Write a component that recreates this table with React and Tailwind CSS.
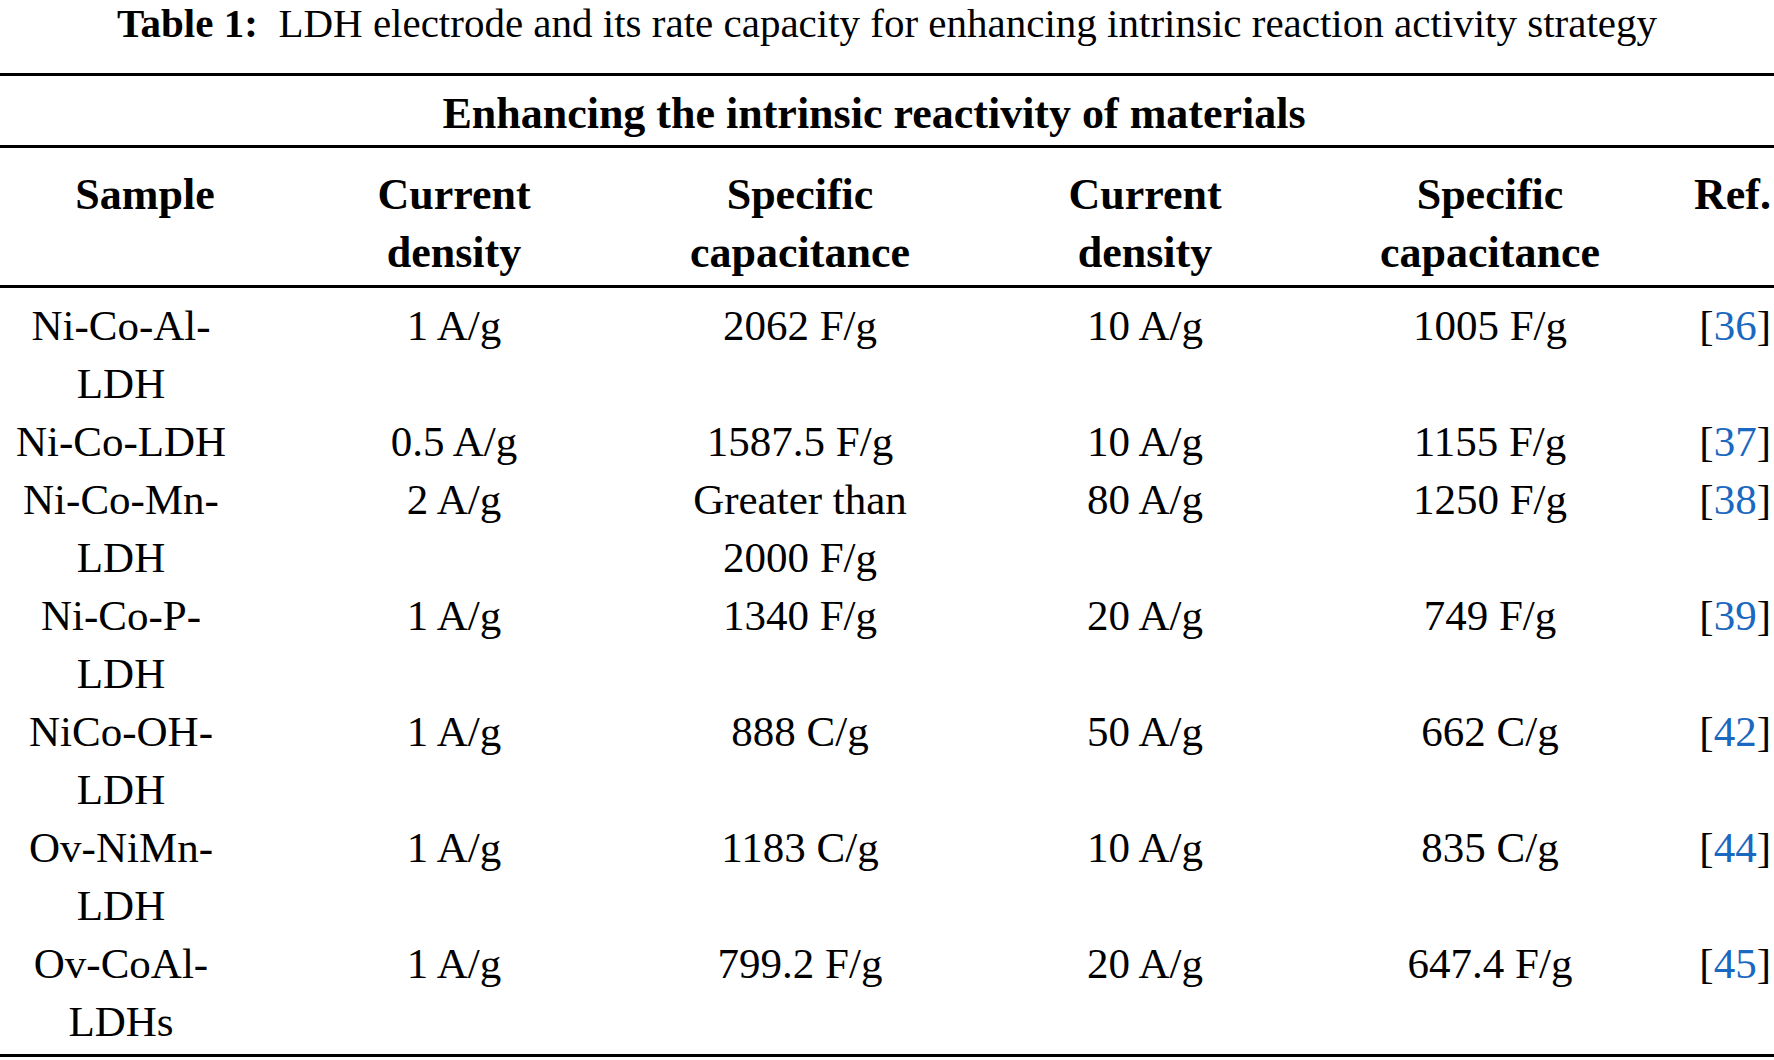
const rows = [
  { sample: ['Ni-Co-Al-', 'LDH'], cd1: '1 A/g', sc1: ['2062 F/g'], cd2: '10 A/g', sc2: '1005 F/g', ref: '36' },
  { sample: ['Ni-Co-LDH'], cd1: '0.5 A/g', sc1: ['1587.5 F/g'], cd2: '10 A/g', sc2: '1155 F/g', ref: '37' },
  { sample: ['Ni-Co-Mn-', 'LDH'], cd1: '2 A/g', sc1: ['Greater than', '2000 F/g'], cd2: '80 A/g', sc2: '1250 F/g', ref: '38' },
  { sample: ['Ni-Co-P-', 'LDH'], cd1: '1 A/g', sc1: ['1340 F/g'], cd2: '20 A/g', sc2: '749 F/g', ref: '39' },
  { sample: ['NiCo-OH-', 'LDH'], cd1: '1 A/g', sc1: ['888 C/g'], cd2: '50 A/g', sc2: '662 C/g', ref: '42' },
  { sample: ['Ov-NiMn-', 'LDH'], cd1: '1 A/g', sc1: ['1183 C/g'], cd2: '10 A/g', sc2: '835 C/g', ref: '44' },
  { sample: ['Ov-CoAl-', 'LDHs'], cd1: '1 A/g', sc1: ['799.2 F/g'], cd2: '20 A/g', sc2: '647.4 F/g', ref: '45' },
]

const cols = 'grid grid-cols-[242px_424px_268px_422px_268px_1fr]'

function Lines({ items }) {
  return items.map((t, i) => <div key={i}>{t}</div>)
}

function App() {
  return (
    <div className="w-[1774px] h-[1060px] bg-white text-black font-['Liberation_Serif',serif] overflow-hidden">
      <p className="h-[73px] text-center text-[41px] leading-[47px]">
        <span className="font-bold">Table 1:</span>&nbsp; LDH electrode and its rate capacity for enhancing intrinsic reaction activity strategy
      </p>

      <div className="border-t-[3px] border-black pt-[9px] pb-[2px] pr-[26px] text-center text-[44px] leading-[58px] font-bold">
        Enhancing the intrinsic reactivity of materials
      </div>

      <div className={cols + ' border-t-[3px] border-black pt-[18px] pb-[3px] text-[44px] leading-[58px] font-bold text-center'}>
        <div className="pl-[48px]">Sample</div>
        <div>Current<br />density</div>
        <div>Specific<br />capacitance</div>
        <div>Current<br />density</div>
        <div>Specific<br />capacitance</div>
        <div className="text-right pr-[3px]">Ref.</div>
      </div>

      <div className="border-t-[3px] border-black border-b-[3px] pt-[9px] pb-[3px] text-[43px] leading-[58px]">
        {rows.map((r) => (
          <div key={r.ref} className={cols + ' text-center'}>
            <div><Lines items={r.sample} /></div>
            <div>{r.cd1}</div>
            <div><Lines items={r.sc1} /></div>
            <div>{r.cd2}</div>
            <div>{r.sc2}</div>
            <div className="text-right pr-[3px]">
              [<span className="text-[#1b68c0]">{r.ref}</span>]
            </div>
          </div>
        ))}
      </div>
    </div>
  )
}

export default App
